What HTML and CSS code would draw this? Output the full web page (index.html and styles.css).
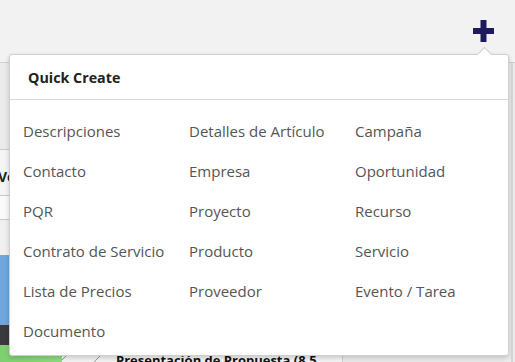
FILE: index.html
```html
<!DOCTYPE html>
<html>
<head>
    <link rel="stylesheet" href="styles.css">
</head>
<body>
    <div id="topbar">
        <span id="plus">
            <svg width="21" height="22" viewBox="0 0 21 22"><rect x="7.5" y="0" width="6" height="22" fill="#1c1b5c"/><rect x="0" y="8" width="21" height="6" fill="#1c1b5c"/></svg>
        </span>
    </div>
    <div id="page">
        <div id="leftCol">
            <div class="block grayBlock"></div>
            <div class="block titleRow"><strong>Ventas</strong></div>
            <div class="block whiteRow"></div>
            <div class="block lightRow"></div>
            <div class="block chart"></div>
            <div class="block darkBar"></div>
            <div class="listRow">
                <span class="greenBadge"></span>
                <span class="slashes"></span>
                <strong class="listTitle">Presentación de Propuesta (8.5</strong>
            </div>
        </div>
        <div id="rightCol"></div>
    </div>

    <div id="quickCreate">
        <div class="caret"></div>
        <div class="qcHeader">Quick Create</div>
        <div class="qcGrid">
            <span class="qcItem">Descripciones</span>
            <span class="qcItem">Detalles de Artículo</span>
            <span class="qcItem">Campaña</span>
            <span class="qcItem">Contacto</span>
            <span class="qcItem">Empresa</span>
            <span class="qcItem">Oportunidad</span>
            <span class="qcItem">PQR</span>
            <span class="qcItem">Proyecto</span>
            <span class="qcItem">Recurso</span>
            <span class="qcItem">Contrato de Servicio</span>
            <span class="qcItem">Producto</span>
            <span class="qcItem">Servicio</span>
            <span class="qcItem">Lista de Precios</span>
            <span class="qcItem">Proveedor</span>
            <span class="qcItem">Evento / Tarea</span>
            <span class="qcItem">Documento</span>
        </div>
    </div>
</body>
</html>
```

FILE: styles.css
```css
html {
    height: 362px;
    overflow: hidden;
}
body {
    margin: 0;
    background-color: #ececec;
    font-family: "Open Sans", "Liberation Sans", sans-serif;
    overflow: hidden;
    position: relative;
    height: 362px;
}
#topbar {
    height: 62px;
    background-color: #f2f2f2;
    border-bottom: 1px solid #cfcfcf;
    display: flex;
    justify-content: flex-end;
    align-items: flex-start;
    padding-right: 21px;
}
#plus {
    margin-top: 20px;
    display: block;
    height: 22px;
}
#page {
    display: flex;
}
#leftCol {
    width: 342px;
    border-right: 1px solid #cfcfcf;
}
#rightCol {
    flex: 1;
    border-right: 2px solid #d6d6d6;
    margin-right: 2px;
}
.block {
    border-bottom: 1px solid #c9c9c9;
}
.grayBlock {
    height: 86px;
    background-color: #ebebeb;
}
.titleRow {
    height: 45px;
    background-color: #f5f5f5;
    font-size: 14px;
    line-height: 54px;
    margin-left: -2px;
    color: #222;
}
.whiteRow {
    height: 23px;
    background-color: #fafafa;
}
.lightRow {
    height: 35px;
    background-color: #f0f0f0;
    border-bottom: none;
}
.chart {
    height: 70px;
    background-color: #6fa6dc;
    border-bottom: none;
}
.darkBar {
    height: 20px;
    background-color: #3a3a3e;
    border-bottom: none;
}
.listRow {
    height: 20px;
    display: flex;
    align-items: flex-start;
    background-color: #f4f4f4;
}
.greenBadge {
    width: 62px;
    height: 20px;
    background: linear-gradient(to right, #7ecf70, #8fdc80);
}
.slashes {
    width: 50px;
    height: 20px;
    background: repeating-linear-gradient(135deg, transparent 0 10px, #9a9a9a 10px 11px, transparent 11px 24px);
}
.listTitle {
    font-size: 13px;
    color: #111;
    margin-left: 4px;
    line-height: 30px;
}

#quickCreate {
    position: absolute;
    left: 9px;
    top: 54px;
    width: 498px;
    background-color: white;
    border: 1px solid #cfcfcf;
    border-radius: 3px;
    box-shadow: 0 2px 5px rgba(0, 0, 0, 0.18);
}
.caret {
    position: absolute;
    top: -6px;
    left: 469px;
    width: 10px;
    height: 10px;
    background-color: white;
    border-left: 1px solid #cfcfcf;
    border-top: 1px solid #cfcfcf;
    transform: rotate(45deg);
}
.qcHeader {
    height: 44px;
    line-height: 45px;
    padding-left: 18px;
    font-size: 14.3px;
    font-weight: bold;
    color: #222;
    border-bottom: 1px solid #d9d9d9;
}
.qcGrid {
    display: grid;
    grid-template-columns: 166px 166px 166px;
    padding: 11px 0 4px 13px;
}
.qcItem {
    height: 40px;
    line-height: 41px;
    font-size: 15px;
    color: #555;
    white-space: nowrap;
}
```
